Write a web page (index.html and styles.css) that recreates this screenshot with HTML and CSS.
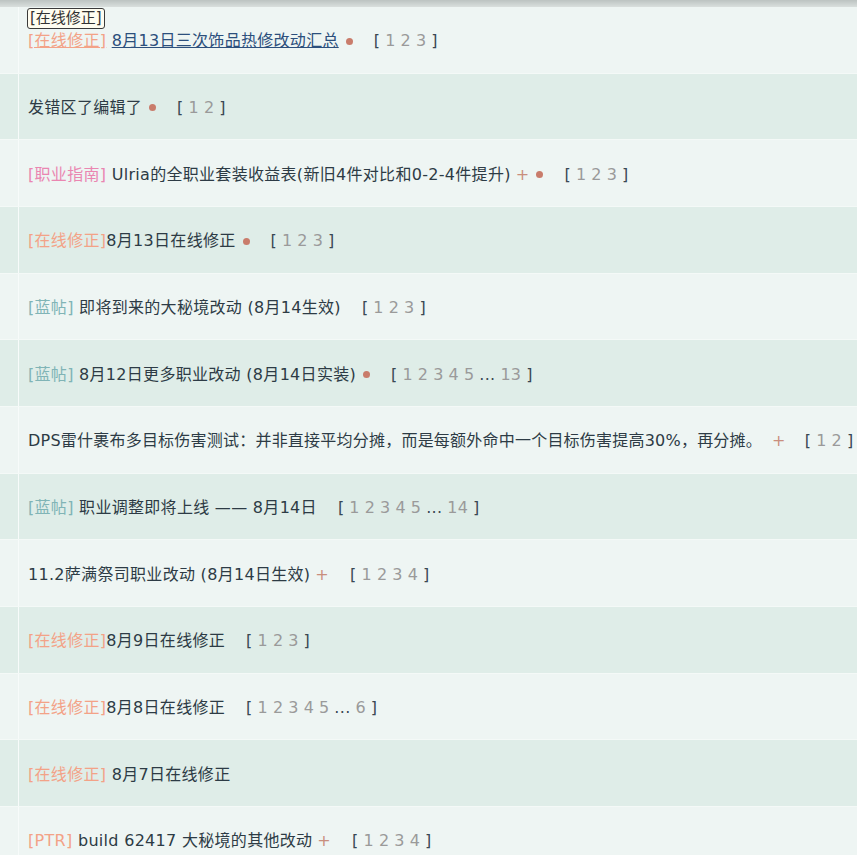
FILE: index.html
```html
<!DOCTYPE html>
<html lang="zh-CN">
<head>
<meta charset="utf-8">
<title>帖子列表</title>
<link rel="stylesheet" href="styles.css">
</head>
<body>
<div class="topbar"></div>
<div class="list">
  <div class="row light">
    <div class="side"></div>
    <div class="cell">
      <a class="link hover"><span class="cat orange">[在线修正]</span> <span class="title">8月13日三次饰品热修改动汇总</span></a>
      <span class="dot"></span>
      <span class="pages">[ <a>1</a> <a>2</a> <a>3</a> ]</span>
      <div class="tip">[在线修正]</div>
    </div>
  </div>
  <div class="row dark">
    <div class="side"></div>
    <div class="cell">
      <a class="link"><span class="title">发错区了编辑了</span></a>
      <span class="dot"></span>
      <span class="pages">[ <a>1</a> <a>2</a> ]</span>
    </div>
  </div>
  <div class="row light">
    <div class="side"></div>
    <div class="cell">
      <a class="link"><span class="cat pink">[职业指南]</span> <span class="title">Ulria的全职业套装收益表(新旧4件对比和0-2-4件提升)</span></a>
      <span class="plus">+</span>
      <span class="dot"></span>
      <span class="pages">[ <a>1</a> <a>2</a> <a>3</a> ]</span>
    </div>
  </div>
  <div class="row dark">
    <div class="side"></div>
    <div class="cell">
      <a class="link"><span class="cat orange">[在线修正]</span><span class="title">8月13日在线修正</span></a>
      <span class="dot"></span>
      <span class="pages">[ <a>1</a> <a>2</a> <a>3</a> ]</span>
    </div>
  </div>
  <div class="row light">
    <div class="side"></div>
    <div class="cell">
      <a class="link"><span class="cat teal">[蓝帖]</span> <span class="title">即将到来的大秘境改动 (8月14生效)</span></a>
      <span class="pages">[ <a>1</a> <a>2</a> <a>3</a> ]</span>
    </div>
  </div>
  <div class="row dark">
    <div class="side"></div>
    <div class="cell">
      <a class="link"><span class="cat teal">[蓝帖]</span> <span class="title">8月12日更多职业改动 (8月14日实装)</span></a>
      <span class="dot"></span>
      <span class="pages">[ <a>1</a> <a>2</a> <a>3</a> <a>4</a> <a>5</a> ... <a>13</a> ]</span>
    </div>
  </div>
  <div class="row light">
    <div class="side"></div>
    <div class="cell">
      <a class="link"><span class="title tight">DPS雷什裹布多目标伤害测试：并非直接平均分摊，而是每额外命中一个目标伤害提高30%，再分摊。</span></a>
      <span class="plus wide">+</span>
      <span class="pages">[ <a>1</a> <a>2</a> ]</span>
    </div>
  </div>
  <div class="row dark">
    <div class="side"></div>
    <div class="cell">
      <a class="link"><span class="cat teal">[蓝帖]</span> <span class="title">职业调整即将上线 —— 8月14日</span></a>
      <span class="pages">[ <a>1</a> <a>2</a> <a>3</a> <a>4</a> <a>5</a> ... <a>14</a> ]</span>
    </div>
  </div>
  <div class="row light">
    <div class="side"></div>
    <div class="cell">
      <a class="link"><span class="title">11.2萨满祭司职业改动 (8月14日生效)</span></a>
      <span class="plus">+</span>
      <span class="pages">[ <a>1</a> <a>2</a> <a>3</a> <a>4</a> ]</span>
    </div>
  </div>
  <div class="row dark">
    <div class="side"></div>
    <div class="cell">
      <a class="link"><span class="cat orange">[在线修正]</span><span class="title">8月9日在线修正</span></a>
      <span class="pages">[ <a>1</a> <a>2</a> <a>3</a> ]</span>
    </div>
  </div>
  <div class="row light">
    <div class="side"></div>
    <div class="cell">
      <a class="link"><span class="cat orange">[在线修正]</span><span class="title">8月8日在线修正</span></a>
      <span class="pages">[ <a>1</a> <a>2</a> <a>3</a> <a>4</a> <a>5</a> ... <a>6</a> ]</span>
    </div>
  </div>
  <div class="row dark">
    <div class="side"></div>
    <div class="cell">
      <a class="link"><span class="cat orange">[在线修正]</span> <span class="title">8月7日在线修正</span></a>
    </div>
  </div>
  <div class="row light">
    <div class="side"></div>
    <div class="cell">
      <a class="link"><span class="cat orange">[PTR]</span> <span class="title">build 62417 大秘境的其他改动</span></a>
      <span class="plus">+</span>
      <span class="pages">[ <a>1</a> <a>2</a> <a>3</a> <a>4</a> ]</span>
    </div>
  </div>
</div>
</body>
</html>
```
FILE: styles.css
```css
html, body {
  margin: 0;
  padding: 0;
}
body {
  width: 857px;
  height: 855px;
  overflow: hidden;
  background: #eef5f3;
  font-family: "DejaVu Sans", "Noto Sans CJK SC", sans-serif;
  font-size: 16px;
  letter-spacing: 0.3px;
  color: #2d3b45;
}
.topbar {
  height: 7px;
  background: linear-gradient(#bcc3c1, #d9dfdd);
}
.list {
  display: flex;
  flex-direction: column;
}
.row {
  height: 66.67px;
  display: flex;
  box-sizing: border-box;
  border-bottom: 1px solid #f4f9f7;
}
.row.light { background: #eef5f3; }
.row.dark { background: #dfede8; }
.side {
  width: 18px;
  flex: none;
  border-right: 1px solid #f7fbfa;
}
.cell {
  position: relative;
  flex: 1;
  display: flex;
  align-items: center;
  padding-left: 9px;
  padding-top: 3px;
  white-space: nowrap;
  line-height: 22px;
}
.link {
  white-space: pre;
}
.cat.orange { color: #f3a287; }
.cat.pink { color: #ea86b1; }
.cat.teal { color: #80b4b6; }
.title { color: #2d3b45; }
.title.tight { letter-spacing: 0.22px; }
.hover .title {
  color: #2c4f7c;
  text-decoration: underline;
}
.hover .cat {
  text-decoration: underline;
}
.dot {
  width: 7px;
  height: 7px;
  border-radius: 50%;
  background: #c97c6b;
  margin-left: 7px;
}
.plus {
  color: #c98e7d;
  margin-left: 5px;
}
.plus.wide {
  margin-left: 10px;
}
.plus.wide + .pages {
  margin-left: 19px;
}
.pages {
  margin-left: 21px;
  color: #3a4853;
  word-spacing: -0.5px;
}
.pages a {
  color: #9a9a9a;
}
.tip {
  position: absolute;
  left: 8px;
  top: 1px;
  padding: 0 2px;
  border: 1px solid #3a3a3a;
  border-radius: 3px;
  background: #fffdf0;
  color: #333;
  font-size: 15px;
  letter-spacing: 0;
  line-height: 19px;
}
```
